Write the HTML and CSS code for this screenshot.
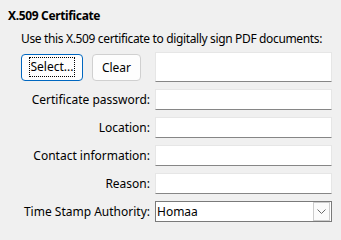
FILE: index.html
```html
<!DOCTYPE html>
<html>
<head>
<meta charset="utf-8">
<link rel="stylesheet" href="styles.css">
</head>
<body>
<div class="panel">
  <div class="title">X.509 Certificate</div>
  <div class="desc">Use this X.509 certificate to digitally sign PDF documents:</div>
  <div class="form">
    <div class="buttons">
      <button class="btn btn-primary"><span class="focus">Select...</span></button>
      <button class="btn">Clear</button>
    </div>
    <div class="input tall"></div>

    <div class="label">Certificate password:</div>
    <div class="input"></div>

    <div class="label">Location:</div>
    <div class="input"></div>

    <div class="label">Contact information:</div>
    <div class="input"></div>

    <div class="label">Reason:</div>
    <div class="input"></div>

    <div class="label">Time Stamp Authority:</div>
    <div class="combo">
      <span class="combo-text">Homaa</span>
      <span class="combo-btn">
        <svg width="9" height="5" viewBox="0 0 9 5"><path d="M0.5 0.5 L4.5 4.5 L8.5 0.5" fill="none" stroke="#6a6a6a" stroke-width="1"/></svg>
      </span>
    </div>
  </div>
</div>
</body>
</html>
```

FILE: styles.css
```css
html, body {
  margin: 0;
  padding: 0;
  background: #f0f0f0;
}
body {
  width: 341px;
  height: 231px;
  overflow: hidden;
  font-family: "Noto Sans", "Liberation Sans", sans-serif;
  font-size: 12px;
  color: #000;
}
.panel {
  padding: 8px 0 0 8px;
}
.title {
  font-weight: bold;
  line-height: 16px;
  height: 16px;
  letter-spacing: -0.35px;
}
.desc {
  margin-top: 7px;
  margin-left: 13px;
  line-height: 16px;
  height: 16px;
  white-space: nowrap;
  letter-spacing: -0.35px;
}
.form {
  margin-top: 5px;
  display: grid;
  grid-template-columns: 142px 177px;
  grid-template-rows: 30px repeat(5, 21px);
  column-gap: 5px;
  row-gap: 7px;
}
.buttons {
  display: flex;
  align-items: center;
  gap: 9px;
  padding-left: 13px;
}
.btn {
  font-family: inherit;
  font-size: 12px;
  color: #000;
  height: 27px;
  background: #fdfdfd;
  border: 1px solid #d0d0d0;
  border-radius: 4px;
  padding: 0;
  width: 49px;
  display: flex;
  align-items: center;
  justify-content: center;
}
.btn-primary {
  width: 62px;
  border-color: #0067c0;
}
.focus {
  outline: 1px dotted #000;
  padding: 1px 1px;
  line-height: 16px;
}
.input {
  background: #fff;
  border: 1px solid #e6e6e6;
  border-bottom-color: #868686;
  box-sizing: border-box;
}
.label {
  text-align: right;
  line-height: 21px;
  white-space: nowrap;
}
.combo {
  background: #fff;
  border: 1px solid #7a7a7a;
  box-sizing: border-box;
  display: flex;
  align-items: center;
  justify-content: space-between;
  padding: 0 0 0 1px;
}
.combo-text {
  line-height: 19px;
}
.combo-btn {
  width: 15px;
  height: 17px;
  margin-right: 1px;
  border: 1px solid #cccccc;
  background: #fbfbfb;
  display: flex;
  align-items: center;
  justify-content: center;
}
```
